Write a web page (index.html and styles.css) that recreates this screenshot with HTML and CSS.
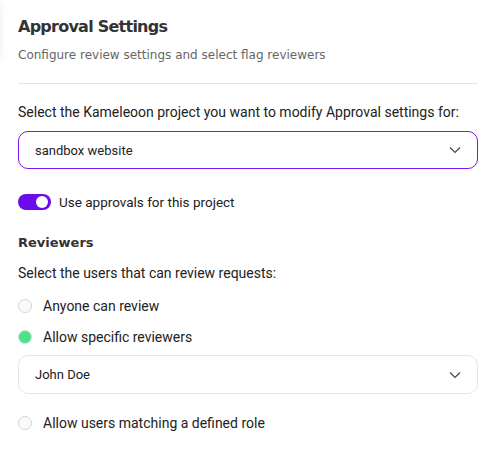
FILE: index.html
```html
<!DOCTYPE html>
<html>
<head>
<meta charset="utf-8">
<link rel="stylesheet" href="styles.css">
</head>
<body>
<div class="edge-shadow"></div>
<main class="panel">
  <header class="head">
    <h1 class="title">Approval Settings</h1>
    <p class="subtitle">Configure review settings and select flag reviewers</p>
  </header>
  <hr class="divider">
  <p class="label">Select the Kameleoon project you want to modify Approval settings for:</p>
  <div class="select select-active">
    <span class="select-text">sandbox website</span>
    <svg class="chev" width="12" height="8" viewBox="0 0 12 8"><path d="M1 1.5 L6 6.5 L11 1.5" fill="none" stroke="#444" stroke-width="1.2"/></svg>
  </div>
  <div class="toggle-row">
    <span class="toggle"><span class="knob"></span></span>
    <span class="toggle-label">Use approvals for this project</span>
  </div>
  <h2 class="section">Reviewers</h2>
  <p class="label label-2">Select the users that can review requests:</p>
  <div class="radio-row radio-first"><span class="radio"></span><span class="radio-label">Anyone can review</span></div>
  <div class="radio-row"><span class="radio radio-on"></span><span class="radio-label">Allow specific reviewers</span></div>
  <div class="select select-plain">
    <span class="select-text">John Doe</span>
    <svg class="chev" width="12" height="8" viewBox="0 0 12 8"><path d="M1 1.5 L6 6.5 L11 1.5" fill="none" stroke="#444" stroke-width="1.2"/></svg>
  </div>
  <div class="radio-row radio-last"><span class="radio"></span><span class="radio-label">Allow users matching a defined role</span></div>
</main>
</body>
</html>
```
FILE: styles.css
```css
* { box-sizing: border-box; }
html, body { margin: 0; padding: 0; background: #fff; }
body { width: 498px; height: 474px; overflow: hidden; position: relative; font-family: Roboto, "Liberation Sans", sans-serif; color: #222; }
.edge-shadow { position: absolute; left: -10px; top: 0; width: 10px; height: 62px; box-shadow: 0 0 8px rgba(0,0,0,0.08); border-radius: 6px; }
.panel { padding: 16px 20px 0 18px; display: flex; flex-direction: column; }
.title { margin: 0; font-family: "DejaVu Sans", sans-serif; font-weight: bold; font-size: 16px; color: #333; line-height: 22px; letter-spacing: -0.75px; }
.subtitle { margin: 9px 0 0; font-family: "DejaVu Sans", sans-serif; font-size: 12px; color: #666; line-height: 16px; }
.divider { border: 0; border-top: 1px solid #e3e3e3; margin: 20px 0 0; }
.label { margin: 19px 0 0; font-size: 14px; line-height: 18px; color: #222; white-space: nowrap; }
.select { margin-top: 10px; height: 38px; border-radius: 10px; display: flex; align-items: center; justify-content: space-between; padding: 0 16px 0 16px; }
.select-active { border: 1.5px solid #7a16ee; }
.select-plain { border: 1px solid #e6e6e6; margin-top: 9px; height: 39px; }
.select-text { font-size: 13px; color: #222; }
.chev { display: block; }
.toggle-row { display: flex; align-items: center; margin-top: 25px; gap: 8px; height: 16px; }
.toggle { width: 33px; height: 16px; border-radius: 8px; background: #6a0ce8; position: relative; display: block; }
.knob { position: absolute; right: 3px; top: 2px; width: 12px; height: 12px; border-radius: 50%; background: #fff; }
.toggle-label { font-size: 13.5px; color: #222; }
.section { margin: 24px 0 0; font-family: "DejaVu Sans", sans-serif; font-weight: bold; font-size: 13px; color: #333; line-height: 18px; }
.label-2 { margin-top: 12px; }
.radio-row { display: flex; align-items: center; gap: 11px; margin-top: 13px; height: 18px; }
.radio-first { margin-top: 15px; }
.radio { width: 14px; height: 14px; border-radius: 50%; border: 1px solid #d6d6d6; background: #fafafa; display: block; flex: none; }
.radio-on { background: #4fe08e; border-color: #c8e8d4; }
.radio-label { font-size: 14px; color: #222; }
.radio-last { margin-top: 20px; }
```
